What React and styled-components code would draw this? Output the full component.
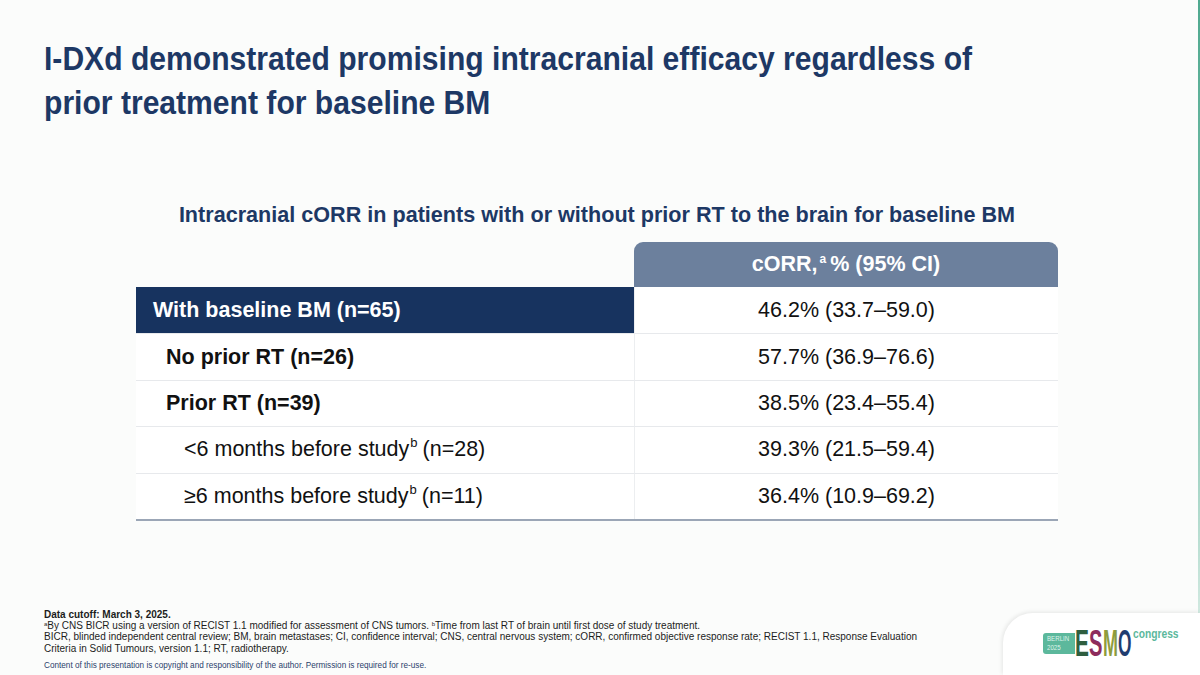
import React from "react";
import styled, { createGlobalStyle } from "styled-components";

const Global = createGlobalStyle`
  html, body { margin: 0; padding: 0; background: #fbfcfb; }
  * { box-sizing: border-box; }
`;

const Slide = styled.div`
  width: 1200px;
  height: 675px;
  overflow: hidden;
  display: flex;
  flex-direction: column;
  font-family: "Liberation Sans", Arial, sans-serif;
  background:
    linear-gradient(to bottom, #4fa98f 0%, #8fcab8 60%, #e4f2ec 100%) right top / 2px 100% no-repeat,
    #fbfcfb;
`;

const Title = styled.h1`
  margin: 36px 0 0 44px;
  font-weight: 700;
  font-size: 34px;
  line-height: 44px;
  color: #1d3865;
  white-space: nowrap;
`;

const Narrow = styled.span`
  display: inline-block;
  transform: scaleX(0.885);
  transform-origin: left top;
`;

const Subtitle = styled.h2`
  margin: 78px 0 0 0;
  text-align: center;
  padding-right: 6px;
  font-weight: 700;
  font-size: 21.6px;
  line-height: 26px;
  color: #1d3865;
`;

const Table = styled.div`
  margin: 14px 0 0 136px;
  width: 922px;
  display: grid;
  grid-template-columns: 498px 424px;
  border-bottom: 2px solid #9ba6b6;
`;

const HeadBlank = styled.div`
  height: 45px;
`;

const HeadCell = styled.div`
  height: 45px;
  background: #6c809d;
  border-radius: 9px 9px 0 0;
  color: #ffffff;
  font-weight: 700;
  font-size: 21.5px;
  display: flex;
  align-items: center;
  justify-content: center;
  sup {
    font-size: 12px;
    line-height: 0;
    vertical-align: 8px;
    margin: 0 4px 0 2px;
  }
`;

const LabelCell = styled.div`
  height: 46.4px;
  display: flex;
  align-items: center;
  padding-left: ${(p) => p.$indent}px;
  font-size: 21.5px;
  font-weight: ${(p) => (p.$bold ? 700 : 400)};
  color: ${(p) => (p.$dark ? "#ffffff" : "#111111")};
  background: ${(p) => (p.$dark ? "#17335f" : "#ffffff")};
  border-top: ${(p) => (p.$first ? "none" : "1px solid #e7e9ec")};
  sup {
    font-size: 13px;
    line-height: 0;
    vertical-align: 9px;
    margin-right: 5px;
    margin-left: 1px;
  }
`;

const ValueCell = styled.div`
  height: 46.4px;
  display: flex;
  align-items: center;
  justify-content: center;
  font-size: 21.5px;
  color: #111111;
  background: #ffffff;
  border-left: 1px solid #eceef0;
  border-top: ${(p) => (p.$first ? "none" : "1px solid #e7e9ec")};
`;

const Footer = styled.div`
  margin-top: auto;
  display: flex;
  align-items: flex-end;
  justify-content: space-between;
`;

const Notes = styled.div`
  padding: 0 0 5px 44px;
  width: 960px;
`;

const NoteText = styled.p`
  margin: 0;
  font-size: 10px;
  line-height: 11.3px;
  color: #1c1c1c;
  white-space: nowrap;
  sup {
    font-size: 6px;
    line-height: 0;
    vertical-align: 3px;
  }
`;

const Cutoff = styled.span`
  font-weight: 700;
`;

const Copyright = styled.p`
  margin: 7px 0 0 0;
  font-size: 8.2px;
  line-height: 9px;
  color: #2b3f6b;
  white-space: nowrap;
`;

const LogoCard = styled.div`
  width: 197px;
  height: 62px;
  flex-shrink: 0;
  background: #ffffff;
  border-radius: 30px 0 0 0;
  box-shadow: -1px -1px 4px rgba(0, 0, 0, 0.09);
  padding: 18px 0 0 40px;
  display: flex;
  align-items: flex-start;
`;

const CityBadge = styled.div`
  width: 32px;
  height: 21px;
  margin-top: 2px;
  background: #5cb89c;
  border-radius: 3px 0 0 3px;
  display: flex;
  flex-direction: column;
  justify-content: center;
  padding-left: 4px;
  overflow: hidden;
`;

const BadgeLine = styled.span`
  display: block;
  font-size: 7.5px;
  line-height: 8.2px;
  color: #dff3eb;
  white-space: nowrap;
  transform: scaleX(0.82);
  transform-origin: left center;
`;

const Wordmark = styled.div`
  display: flex;
  height: 26px;
`;

const LetterBox = styled.div`
  width: ${(p) => p.$w}px;
  height: 26px;
  overflow: visible;
`;

const Letter = styled.span`
  display: inline-block;
  font-weight: 700;
  font-size: 36px;
  line-height: 26px;
  color: ${(p) => p.$c};
  transform: scaleX(${(p) => p.$k});
  transform-origin: left top;
`;

const Congress = styled.span`
  display: inline-block;
  margin: -3px 0 0 2px;
  font-weight: 700;
  font-size: 12.5px;
  line-height: 12px;
  color: #5cb89c;
  transform: scaleX(0.82);
  transform-origin: left top;
`;

const rows = [
  { label: "With baseline BM (n=65)", value: "46.2% (33.7–59.0)", indent: 17, bold: true, dark: true },
  { label: "No prior RT (n=26)", value: "57.7% (36.9–76.6)", indent: 30, bold: true },
  { label: "Prior RT (n=39)", value: "38.5% (23.4–55.4)", indent: 30, bold: true },
  { label: ["<6 months before study", "(n=28)"], value: "39.3% (21.5–59.4)", indent: 48 },
  { label: ["≥6 months before study", "(n=11)"], value: "36.4% (10.9–69.2)", indent: 48 },
];

const letters = [
  { ch: "E", c: "#2f5e3f", w: 14, k: 0.58 },
  { ch: "S", c: "#8d2c5c", w: 13.5, k: 0.56 },
  { ch: "M", c: "#8e9c3d", w: 15, k: 0.5 },
  { ch: "O", c: "#1f3c6f", w: 13, k: 0.48 },
];

export default function App() {
  return (
    <>
      <Global />
      <Slide>
        <Title>
          <Narrow>
            I-DXd demonstrated promising intracranial efficacy regardless of
            <br />
            prior treatment for baseline BM
          </Narrow>
        </Title>
        <Subtitle>Intracranial cORR in patients with or without prior RT to the brain for baseline BM</Subtitle>
        <Table>
          <HeadBlank />
          <HeadCell>
            <span>
              cORR,<sup>a</sup>% (95% CI)
            </span>
          </HeadCell>
          {rows.map((r, i) => (
            <React.Fragment key={i}>
              <LabelCell $indent={r.indent} $bold={r.bold} $dark={r.dark} $first={i === 0}>
                <span>
                  {Array.isArray(r.label) ? (
                    <>
                      {r.label[0]}
                      <sup>b</sup>
                      {r.label[1]}
                    </>
                  ) : (
                    r.label
                  )}
                </span>
              </LabelCell>
              <ValueCell $first={i === 0}>{r.value}</ValueCell>
            </React.Fragment>
          ))}
        </Table>
        <Footer>
          <Notes>
            <NoteText>
              <Cutoff>Data cutoff: March 3, 2025.</Cutoff>
              <br />
              <sup>a</sup>By CNS BICR using a version of RECIST 1.1 modified for assessment of CNS tumors. <sup>b</sup>Time from last RT of brain until first dose of study treatment.
              <br />
              BICR, blinded independent central review; BM, brain metastases; CI, confidence interval; CNS, central nervous system; cORR, confirmed objective response rate; RECIST 1.1, Response Evaluation
              <br />
              Criteria in Solid Tumours, version 1.1; RT, radiotherapy.
            </NoteText>
            <Copyright>Content of this presentation is copyright and responsibility of the author. Permission is required for re-use.</Copyright>
          </Notes>
          <LogoCard>
            <CityBadge>
              <BadgeLine>BERLIN</BadgeLine>
              <BadgeLine>2025</BadgeLine>
            </CityBadge>
            <Wordmark>
              {letters.map((l) => (
                <LetterBox key={l.ch} $w={l.w}>
                  <Letter $c={l.c} $k={l.k}>{l.ch}</Letter>
                </LetterBox>
              ))}
            </Wordmark>
            <Congress>congress</Congress>
          </LogoCard>
        </Footer>
      </Slide>
    </>
  );
}
